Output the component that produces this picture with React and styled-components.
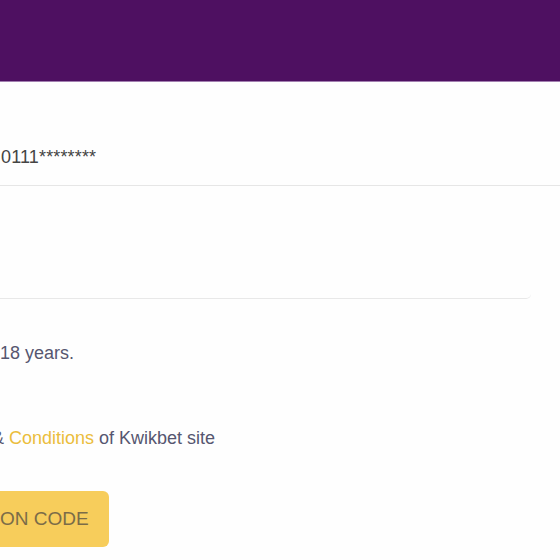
import React from "react";
import styled, { createGlobalStyle } from "styled-components";

const Global = createGlobalStyle`
  html, body { margin: 0; padding: 0; background: #ffffff; }
  body { font-family: "Liberation Sans", Arial, sans-serif; overflow: hidden; }
`;

const Page = styled.div`
  width: 560px;
  height: 560px;
  overflow: hidden;
  background: #fefefe;
  display: flex;
  flex-direction: column;
`;

const Header = styled.header`
  height: 81px;
  background: #4e1061;
  border-bottom: 1px solid #a27fb0;
  flex-shrink: 0;
`;

const Form = styled.form`
  display: flex;
  flex-direction: column;
`;

const PhoneField = styled.div`
  height: 104px;
  display: flex;
  align-items: flex-end;
  padding: 0 0 17px 1px;
  box-sizing: border-box;
  border-bottom: 1px solid #e6e6e6;
  font-size: 18px;
  letter-spacing: 0.15px;
  color: #444444;
`;

const TextBox = styled.div`
  width: 531px;
  height: 113px;
  box-sizing: border-box;
  border-bottom: 1px solid #e8e8e8;
  border-bottom-right-radius: 5px;
`;

const CheckLine = styled.p`
  margin: ${(p) => p.$top}px 0 0 ${(p) => p.$indent || 0}px;
  font-size: 18px;
  line-height: 20px;
  color: #565670;
  white-space: nowrap;
`;

const Link = styled.span`
  color: #ebbd3c;
`;

const SubmitButton = styled.button`
  align-self: flex-start;
  margin: 43px 0 0 -30px;
  height: 56px;
  padding: 0 20px 0 30px;
  border: none;
  border-radius: 6px;
  background: #f7cd5b;
  color: #7b6c48;
  font-family: "Liberation Sans", Arial, sans-serif;
  font-size: 19px;
`;

export default function App() {
  return (
    <>
      <Global />
      <Page>
        <Header />
        <Form>
          <PhoneField>
            <span>0111********</span>
          </PhoneField>
          <TextBox />
          <CheckLine $top={44}>18 years.</CheckLine>
          <CheckLine $top={65} $indent={-8}>
            &amp; <Link>Conditions</Link> of Kwikbet site
          </CheckLine>
          <SubmitButton type="button">ON CODE</SubmitButton>
        </Form>
      </Page>
    </>
  );
}
